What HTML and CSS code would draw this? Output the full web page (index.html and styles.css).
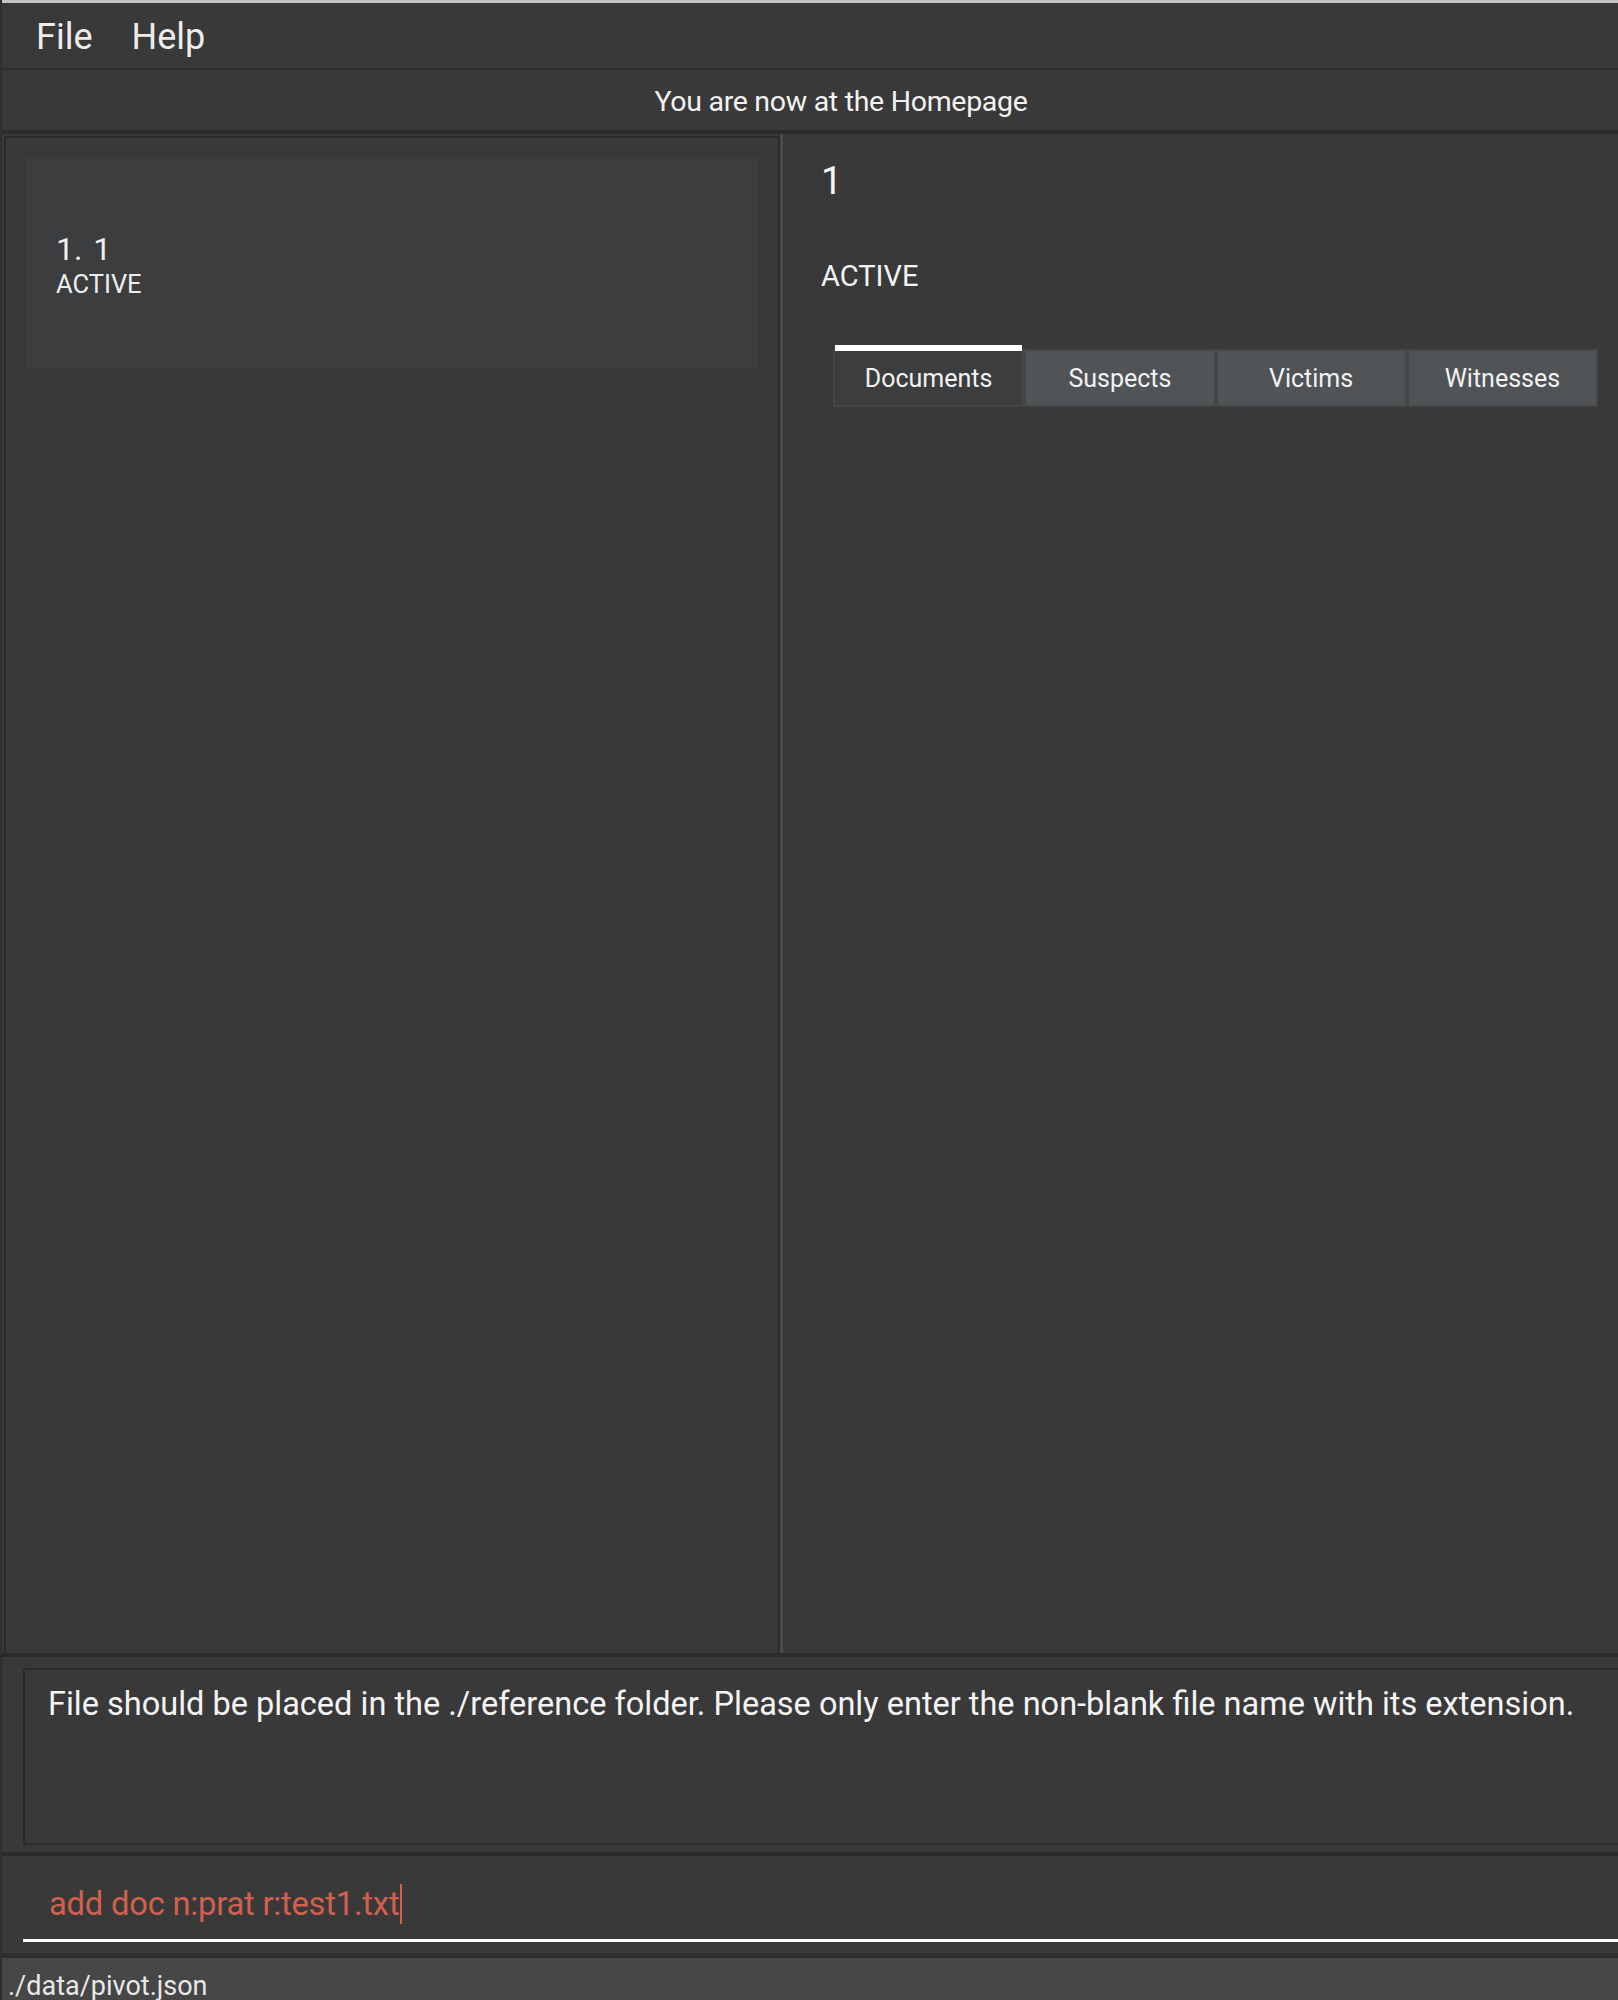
FILE: index.html
```html
<!DOCTYPE html>
<html>
<head>
<meta charset="utf-8">
<link rel="stylesheet" href="styles.css">
</head>
<body>
<div class="window">
  <div class="topstrip"></div>
  <div class="menubar">
    <span class="menu-item">File</span>
    <span class="menu-item">Help</span>
  </div>
  <div class="statusbar">You are now at the Homepage</div>
  <div class="main">
    <div class="left-panel">
      <div class="list-box">
        <div class="card">
          <div class="card-title">1. 1</div>
          <div class="card-status">ACTIVE</div>
        </div>
      </div>
    </div>
    <div class="right-panel">
      <div class="detail-title">1</div>
      <div class="detail-status">ACTIVE</div>
      <div class="tabs">
        <div class="tab active">Documents</div>
        <div class="tab">Suspects</div>
        <div class="tab">Victims</div>
        <div class="tab">Witnesses</div>
      </div>
    </div>
  </div>
  <div class="result-section">
    <div class="result-box">File should be placed in the ./reference folder. Please only enter the non-blank file name with its extension.</div>
  </div>
  <div class="command-section">
    <div class="command-box"><span class="command-text">add doc n:prat r:test1.txt</span><span class="caret"></span></div>
  </div>
  <div class="footer">./data/pivot.json</div>
</div>
</body>
</html>
```

FILE: styles.css
```css
html, body {
  margin: 0;
  padding: 0;
  background: #393939;
  height: 2000px;
  overflow: hidden;
}
.window {
  display: flex;
  flex-direction: column;
  height: 2000px;
  font-family: Roboto, "Liberation Sans", sans-serif;
  color: #f2f2f2;
  border-left: 2px solid #2f2f2f;
  box-sizing: border-box;
}
.topstrip {
  height: 3px;
  background: #c4c4c4;
  flex: none;
}
.menubar {
  height: 67px;
  flex: none;
  display: flex;
  align-items: center;
  padding-left: 34px;
  gap: 39px;
  background: #393939;
  border-bottom: 2px solid #2d2d2d;
  box-sizing: border-box;
}
.menu-item {
  font-size: 36px;
  color: #ececec;
  line-height: 1;
  margin-top: 3px;
}
.statusbar {
  height: 64px;
  flex: none;
  display: flex;
  align-items: center;
  justify-content: center;
  font-size: 28.5px;
  letter-spacing: -0.3px;
  background: #393939;
  border-bottom: 4px solid #2b2b2b;
  box-sizing: border-box;
  padding-top: 2px;
  padding-left: 62px;
}
.main {
  height: 1519px;
  flex: none;
  display: flex;
}
.left-panel {
  width: 781px;
  flex: none;
  padding: 2px 0 0 2px;
  box-sizing: border-box;
  border-right: 3px solid #4a4a4a;
  display: flex;
}
.list-box {
  flex: 1;
  border: 2px solid #2b2b2b;
  padding: 20px 20px 0 20px;
  box-sizing: border-box;
  margin-bottom: -2px;
}
.card {
  height: 210px;
  background: #3c3d3f;
  padding-left: 30px;
  display: flex;
  flex-direction: column;
  justify-content: center;
  box-sizing: border-box;
  padding-top: 3px;
}
.card-title {
  font-size: 32px;
  line-height: 38px;
  color: #f0f0f0;
  word-spacing: 3px;
}
.card-status {
  font-size: 25.5px;
  line-height: 32px;
  color: #eeeeee;
}
.right-panel {
  flex: 1;
  padding: 24px 0 0 38px;
  box-sizing: border-box;
  display: flex;
  flex-direction: column;
}
.detail-title {
  font-size: 38px;
  line-height: 46px;
  color: #f4f4f4;
}
.detail-status {
  font-size: 29px;
  line-height: 34px;
  margin-top: 55px;
  color: #f4f4f4;
}
.tabs {
  margin-top: 52px;
  margin-left: 12px;
  width: 765px;
  display: flex;
  gap: 4px;
  background: #454747;
  padding: 0 2px 2px 2px;
  box-sizing: border-box;
  border-top: 4px solid #393939;
  height: 62px;
  align-items: flex-end;
}
.tab {
  flex: 1;
  height: 54px;
  background: #505456;
  display: flex;
  align-items: center;
  justify-content: center;
  font-size: 25px;
  color: #f2f2f2;
}
.tab.active {
  background: #3c3d3f;
  border-top: 6px solid #ffffff;
  margin-top: -4px;
  align-self: flex-end;
  height: 60px;
  box-sizing: border-box;
}
.result-section {
  flex: none;
  height: 199px;
  border-top: 4px solid #2b2b2b;
  padding: 11px 0 0 21px;
  box-sizing: border-box;
}
.result-box {
  height: 177px;
  border: 2px solid #2b2b2b;
  border-right: none;
  padding: 15px 0 0 23px;
  box-sizing: border-box;
  font-size: 32.5px;
  color: #f4f4f4;
  white-space: nowrap;
  overflow: hidden;
}
.command-section {
  flex: none;
  height: 101px;
  border-top: 4px solid #2b2b2b;
  padding-left: 21px;
  box-sizing: border-box;
  display: flex;
  flex-direction: column;
}
.command-box {
  height: 86px;
  border-bottom: 3px solid #ffffff;
  display: flex;
  align-items: center;
  padding-left: 26px;
  padding-top: 12px;
  box-sizing: border-box;
}
.command-text {
  font-size: 32.7px;
  color: #d2604e;
  letter-spacing: -0.2px;
}
.caret {
  display: inline-block;
  width: 2px;
  height: 40px;
  background: #d2604e;
  margin-left: 1px;
}
.footer {
  flex: 1;
  background: #464646;
  border-top: 5px solid #2e2e2e;
  font-size: 27px;
  color: #e8e8e8;
  padding: 12px 0 0 6px;
  box-sizing: border-box;
  line-height: 32px;
}
```
